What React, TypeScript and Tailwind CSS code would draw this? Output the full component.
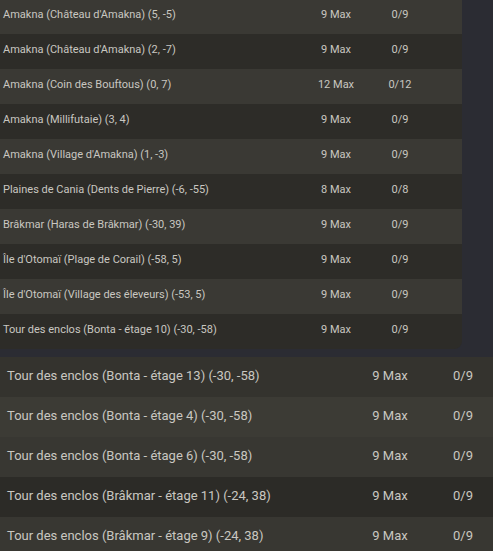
import React from 'react'

interface Enclos {
  name: string
  max: number
}

const topRows: Enclos[] = [
  { name: "Amakna (Château d'Amakna) (5, -5)", max: 9 },
  { name: "Amakna (Château d'Amakna) (2, -7)", max: 9 },
  { name: 'Amakna (Coin des Bouftous) (0, 7)', max: 12 },
  { name: 'Amakna (Millifutaie) (3, 4)', max: 9 },
  { name: "Amakna (Village d'Amakna) (1, -3)", max: 9 },
  { name: 'Plaines de Cania (Dents de Pierre) (-6, -55)', max: 8 },
  { name: 'Brâkmar (Haras de Brâkmar) (-30, 39)', max: 9 },
  { name: "Île d'Otomaï (Plage de Corail) (-58, 5)", max: 9 },
  { name: "Île d'Otomaï (Village des éleveurs) (-53, 5)", max: 9 },
  { name: 'Tour des enclos (Bonta - étage 10) (-30, -58)', max: 9 },
]

const bottomRows: Enclos[] = [
  { name: 'Tour des enclos (Bonta - étage 13) (-30, -58)', max: 9 },
  { name: 'Tour des enclos (Bonta - étage 4) (-30, -58)', max: 9 },
  { name: 'Tour des enclos (Bonta - étage 6) (-30, -58)', max: 9 },
  { name: 'Tour des enclos (Brâkmar - étage 11) (-24, 38)', max: 9 },
  { name: 'Tour des enclos (Brâkmar - étage 9) (-24, 38)', max: 9 },
]

// alternating stone shades, bottom list is a bit uneven in the screenshot
const bottomBg = ['bg-[#34332e]', 'bg-[#3c3b35]', 'bg-[#383732]', 'bg-[#2c2b27]', 'bg-[#383732]']

const App = () => {
  return (
    <div
      className="w-[493px] h-[551px] overflow-hidden bg-[#2b2c33] text-[#c9c7c1]"
      style={{ fontFamily: 'Roboto, "Noto Sans", sans-serif' }}
    >
      <div className="w-[462px] -mt-px rounded-br-lg overflow-hidden">
        {topRows.map((row, i) => (
          <div
            key={row.name}
            className={`grid grid-cols-[300px_72px_56px] items-center h-[35px] text-[11px] ${
              i % 2 === 0 ? 'bg-[#3a3934]' : 'bg-[#2d2c28]'
            }`}
          >
            <span className="pl-[3px] pb-[2px] truncate">{row.name}</span>
            <span className="text-center pb-[2px]">{row.max} Max</span>
            <span className="text-center pb-[2px]">0/{row.max}</span>
          </div>
        ))}
      </div>

      <div className="mt-2">
        {bottomRows.map((row, i) => (
          <div
            key={row.name}
            className={`grid grid-cols-[347px_86px_60px] items-center h-[40px] text-[13px] ${bottomBg[i]}`}
          >
            <span className="pl-[7px] pb-[2px] truncate">{row.name}</span>
            <span className="text-center pb-[2px]">{row.max} Max</span>
            <span className="text-center pb-[2px]">0/{row.max}</span>
          </div>
        ))}
      </div>
    </div>
  )
}

export default App
